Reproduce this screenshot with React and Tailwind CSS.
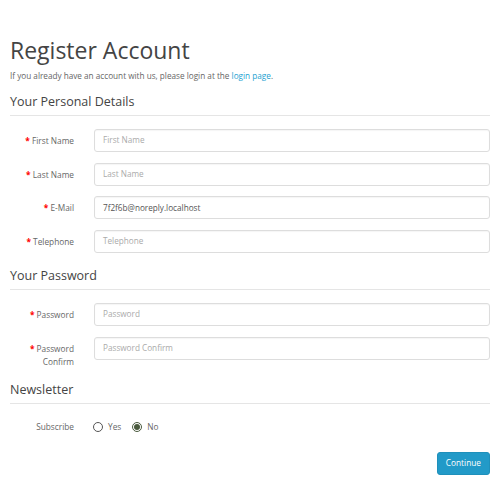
const Field = ({ label, placeholder, value, twoLine }) => (
  <div className="flex items-start">
    <label className="w-[64px] shrink-0 text-right text-[8.3px] leading-[13px] text-[#666] pt-[5px]">
      <span className="text-[#f00] font-bold">* </span>
      {twoLine ? (
        <>
          Password
          <br />
          Confirm
        </>
      ) : (
        label
      )}
    </label>
    <div className="ml-[20px] flex-1">
      <div
        className={
          "h-[23px] rounded-[3px] border border-[#ddd] bg-white px-[8px] flex items-center text-[8.2px] shadow-[inset_0_1px_1px_rgba(0,0,0,0.04)] " +
          (value ? "text-[#555]" : "text-[#aaa]")
        }
      >
        {value || placeholder}
      </div>
    </div>
  </div>
);

const Legend = ({ children }) => (
  <div className="border-b border-[#e5e5e5] pb-[4px] mb-[13px]">
    <h2 className="text-[12.5px] leading-[18px] text-[#444]">{children}</h2>
  </div>
);

export default function App() {
  return (
    <div className="w-[500px] h-[500px] bg-white px-[10px] pt-[35px] font-['Open_Sans',sans-serif] text-[#666]">
      <h1 className="text-[23px] leading-[30px] text-[#444]">Register Account</h1>
      <p className="text-[8.2px] leading-[12px] mt-[5px]">
        If you already have an account with us, please login at the{" "}
        <span className="text-[#23a1d1]">login page</span>.
      </p>

      {/* ── Personal details ── */}
      <div className="mt-[11px]">
        <Legend>Your Personal Details</Legend>
        <div className="flex flex-col gap-[10.7px]">
          <Field label="First Name" placeholder="First Name" />
          <Field label="Last Name" placeholder="Last Name" />
          <Field label="E-Mail" value="7f2f6b@noreply.localhost" />
          <Field label="Telephone" placeholder="Telephone" />
        </div>
      </div>

      {/* ── Password ── */}
      <div className="mt-[14px]">
        <Legend>Your Password</Legend>
        <div className="flex flex-col gap-[10.7px]">
          <Field label="Password" placeholder="Password" />
          <Field twoLine placeholder="Password Confirm" />
        </div>
      </div>

      {/* ── Newsletter ── */}
      <div className="mt-[13px]">
        <Legend>Newsletter</Legend>
        <div className="flex items-center h-[20px]">
          <div className="w-[64px] shrink-0 text-right text-[8.3px]">Subscribe</div>
          <div className="ml-[19px] flex items-center gap-[5px] text-[8.3px]">
            <span className="w-[10px] h-[10px] rounded-full border border-[#555] bg-white" />
            <span>Yes</span>
            <span className="ml-[6px] w-[10px] h-[10px] rounded-full border border-[#4a5a3e] bg-white flex items-center justify-center">
              <span className="w-[6px] h-[6px] rounded-full bg-[#4a5a3e]" />
            </span>
            <span>No</span>
          </div>
        </div>
      </div>

      <div className="flex justify-end mt-[15px]">
        <button className="h-[23px] px-[8px] rounded-[3px] bg-[#229ac8] border border-[#1f90bb] text-white text-[8.3px]">
          Continue
        </button>
      </div>
    </div>
  );
}
